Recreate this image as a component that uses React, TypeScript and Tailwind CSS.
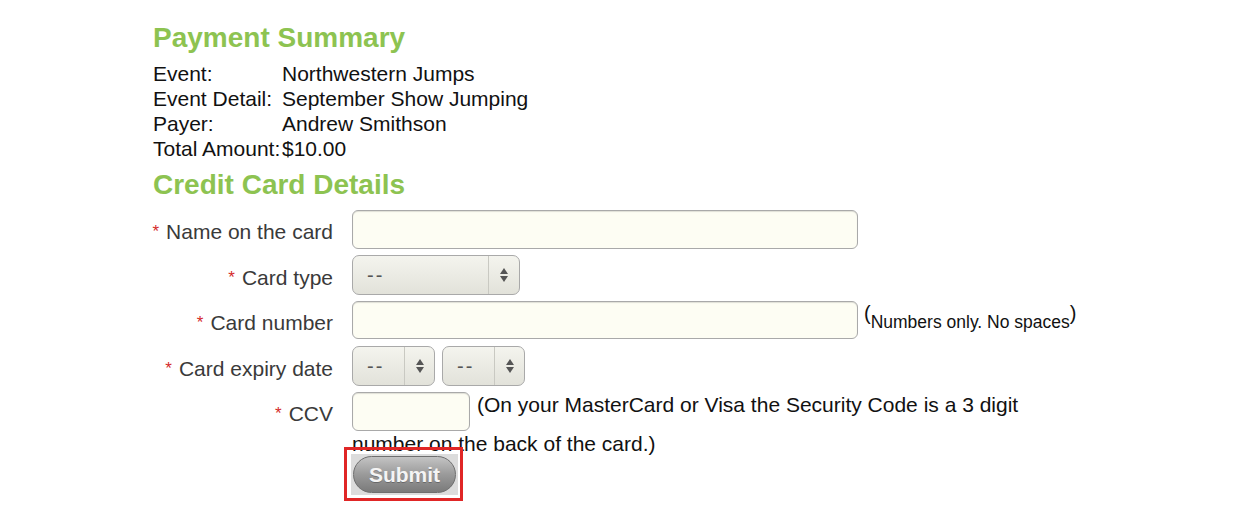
import React from 'react';

const summary = [
  { label: 'Event:', value: 'Northwestern Jumps' },
  { label: 'Event Detail:', value: 'September Show Jumping' },
  { label: 'Payer:', value: 'Andrew Smithson' },
  { label: 'Total Amount:', value: '$10.00' },
];

const Label: React.FC<{ text: string }> = ({ text }) => (
  <div className="w-[181px] shrink-0 whitespace-nowrap pt-[4px] text-right text-[21px] leading-[25px] text-[#3a3a3a]">
    <span className="mr-[7px] align-[2px] text-[17px] text-[#d42b2b]">*</span>
    {text}
  </div>
);

const TextBox: React.FC<{ className?: string }> = ({ className = '' }) => (
  <input
    type="text"
    className={`block rounded-[6px] border border-[#a9a9a9] bg-[#fdfdf3] shadow-[inset_0_1px_1px_rgba(0,0,0,0.12)] outline-none ${className}`}
  />
);

const Select: React.FC<{ width: string; divider: string }> = ({ width, divider }) => (
  <div
    className={`flex h-[40px] ${width} items-stretch rounded-[7px] border border-[#a9a9a9] bg-gradient-to-b from-[#f4f4ee] to-[#e2e2da] shadow-[0_1px_0_rgba(255,255,255,0.8)]`}
  >
    <div className={`flex ${divider} items-center pl-[14px] text-[20px] tracking-[2px] text-[#555]`}>--</div>
    <div className="flex flex-1 items-center justify-center border-l border-[#c9c9c2]">
      <svg width="10" height="16" viewBox="0 0 10 16">
        <path d="M5 1 L9 7 L1 7 Z" fill="#555" />
        <path d="M5 15 L9 9 L1 9 Z" fill="#555" />
      </svg>
    </div>
  </div>
);

export default function App() {
  return (
    <div className="min-h-screen bg-white pl-[153px] pt-[22px] font-['Liberation_Sans',Arial,sans-serif]">
      <h2 className="text-[28px] leading-[32px] font-bold text-[#8dc351]">Payment Summary</h2>

      <div className="mt-[7px] grid grid-cols-[129px_auto] text-[21px] leading-[25px] text-[#111]">
        {summary.map((row) => (
          <React.Fragment key={row.label}>
            <div className="whitespace-nowrap">{row.label}</div>
            <div>{row.value}</div>
          </React.Fragment>
        ))}
      </div>

      <h2 className="mt-[8px] text-[28px] leading-[32px] font-bold text-[#8dc351]">Credit Card Details</h2>

      <form className="-ml-px mt-[9px]" onSubmit={(e) => e.preventDefault()}>
        <div className="flex items-center">
          <Label text="Name on the card" />
          <TextBox className="ml-[19px] h-[39px] w-[506px]" />
        </div>

        <div className="mt-[6px] flex items-center">
          <Label text="Card type" />
          <div className="ml-[19px]">
            <Select width="w-[168px]" divider="w-[135px]" />
          </div>
        </div>

        <div className="mt-[6px] flex items-start">
          <div className="flex h-[38px] items-center">
            <Label text="Card number" />
          </div>
          <TextBox className="ml-[19px] h-[38px] w-[506px]" />
          <div className="ml-[6px] text-[20px] leading-[25px] text-[#111]">
            (<span className="align-[-8px] text-[17.5px]">Numbers only. No spaces</span>)
          </div>
        </div>

        <div className="mt-[7px] flex items-center">
          <Label text="Card expiry date" />
          <div className="ml-[19px] flex gap-[7px]">
            <Select width="w-[83px]" divider="w-[51px]" />
            <Select width="w-[83px]" divider="w-[51px]" />
          </div>
        </div>

        <div className="mt-[6px] flex items-start">
          <div className="flex h-[39px] items-center">
            <Label text="CCV" />
          </div>
          <div className="ml-[19px] w-[700px] text-[21px] leading-[25px] text-[#111]">
            <input
              type="text"
              className="mr-[7px] inline-block h-[39px] w-[118px] rounded-[6px] border border-[#a9a9a9] bg-[#fdfdf3] align-top shadow-[inset_0_1px_1px_rgba(0,0,0,0.12)] outline-none"
            />
            (On your MasterCard or Visa the Security Code is a 3 digit number on the back of the card.)
          </div>
        </div>

        <div className="-mt-[2px] ml-[199px]">
          <div className="relative inline-block">
            <div className="bg-[#dcdcdc] p-[2px]">
              <button
                type="submit"
                className="flex h-[37px] w-[103px] items-center justify-center rounded-full border border-[#6e6e6e] bg-gradient-to-b from-[#c4c4c4] via-[#9a9a9a] to-[#7a7a7a] text-[21px] font-bold text-[#f4f4f4] [text-shadow:0_1px_0_rgba(0,0,0,0.25)]"
              >
                Submit
              </button>
            </div>
            <div className="pointer-events-none absolute -bottom-[6px] -left-[7px] -right-[5px] -top-[7px] border-[3px] border-[#e02626]" />
          </div>
        </div>
      </form>
    </div>
  );
}
